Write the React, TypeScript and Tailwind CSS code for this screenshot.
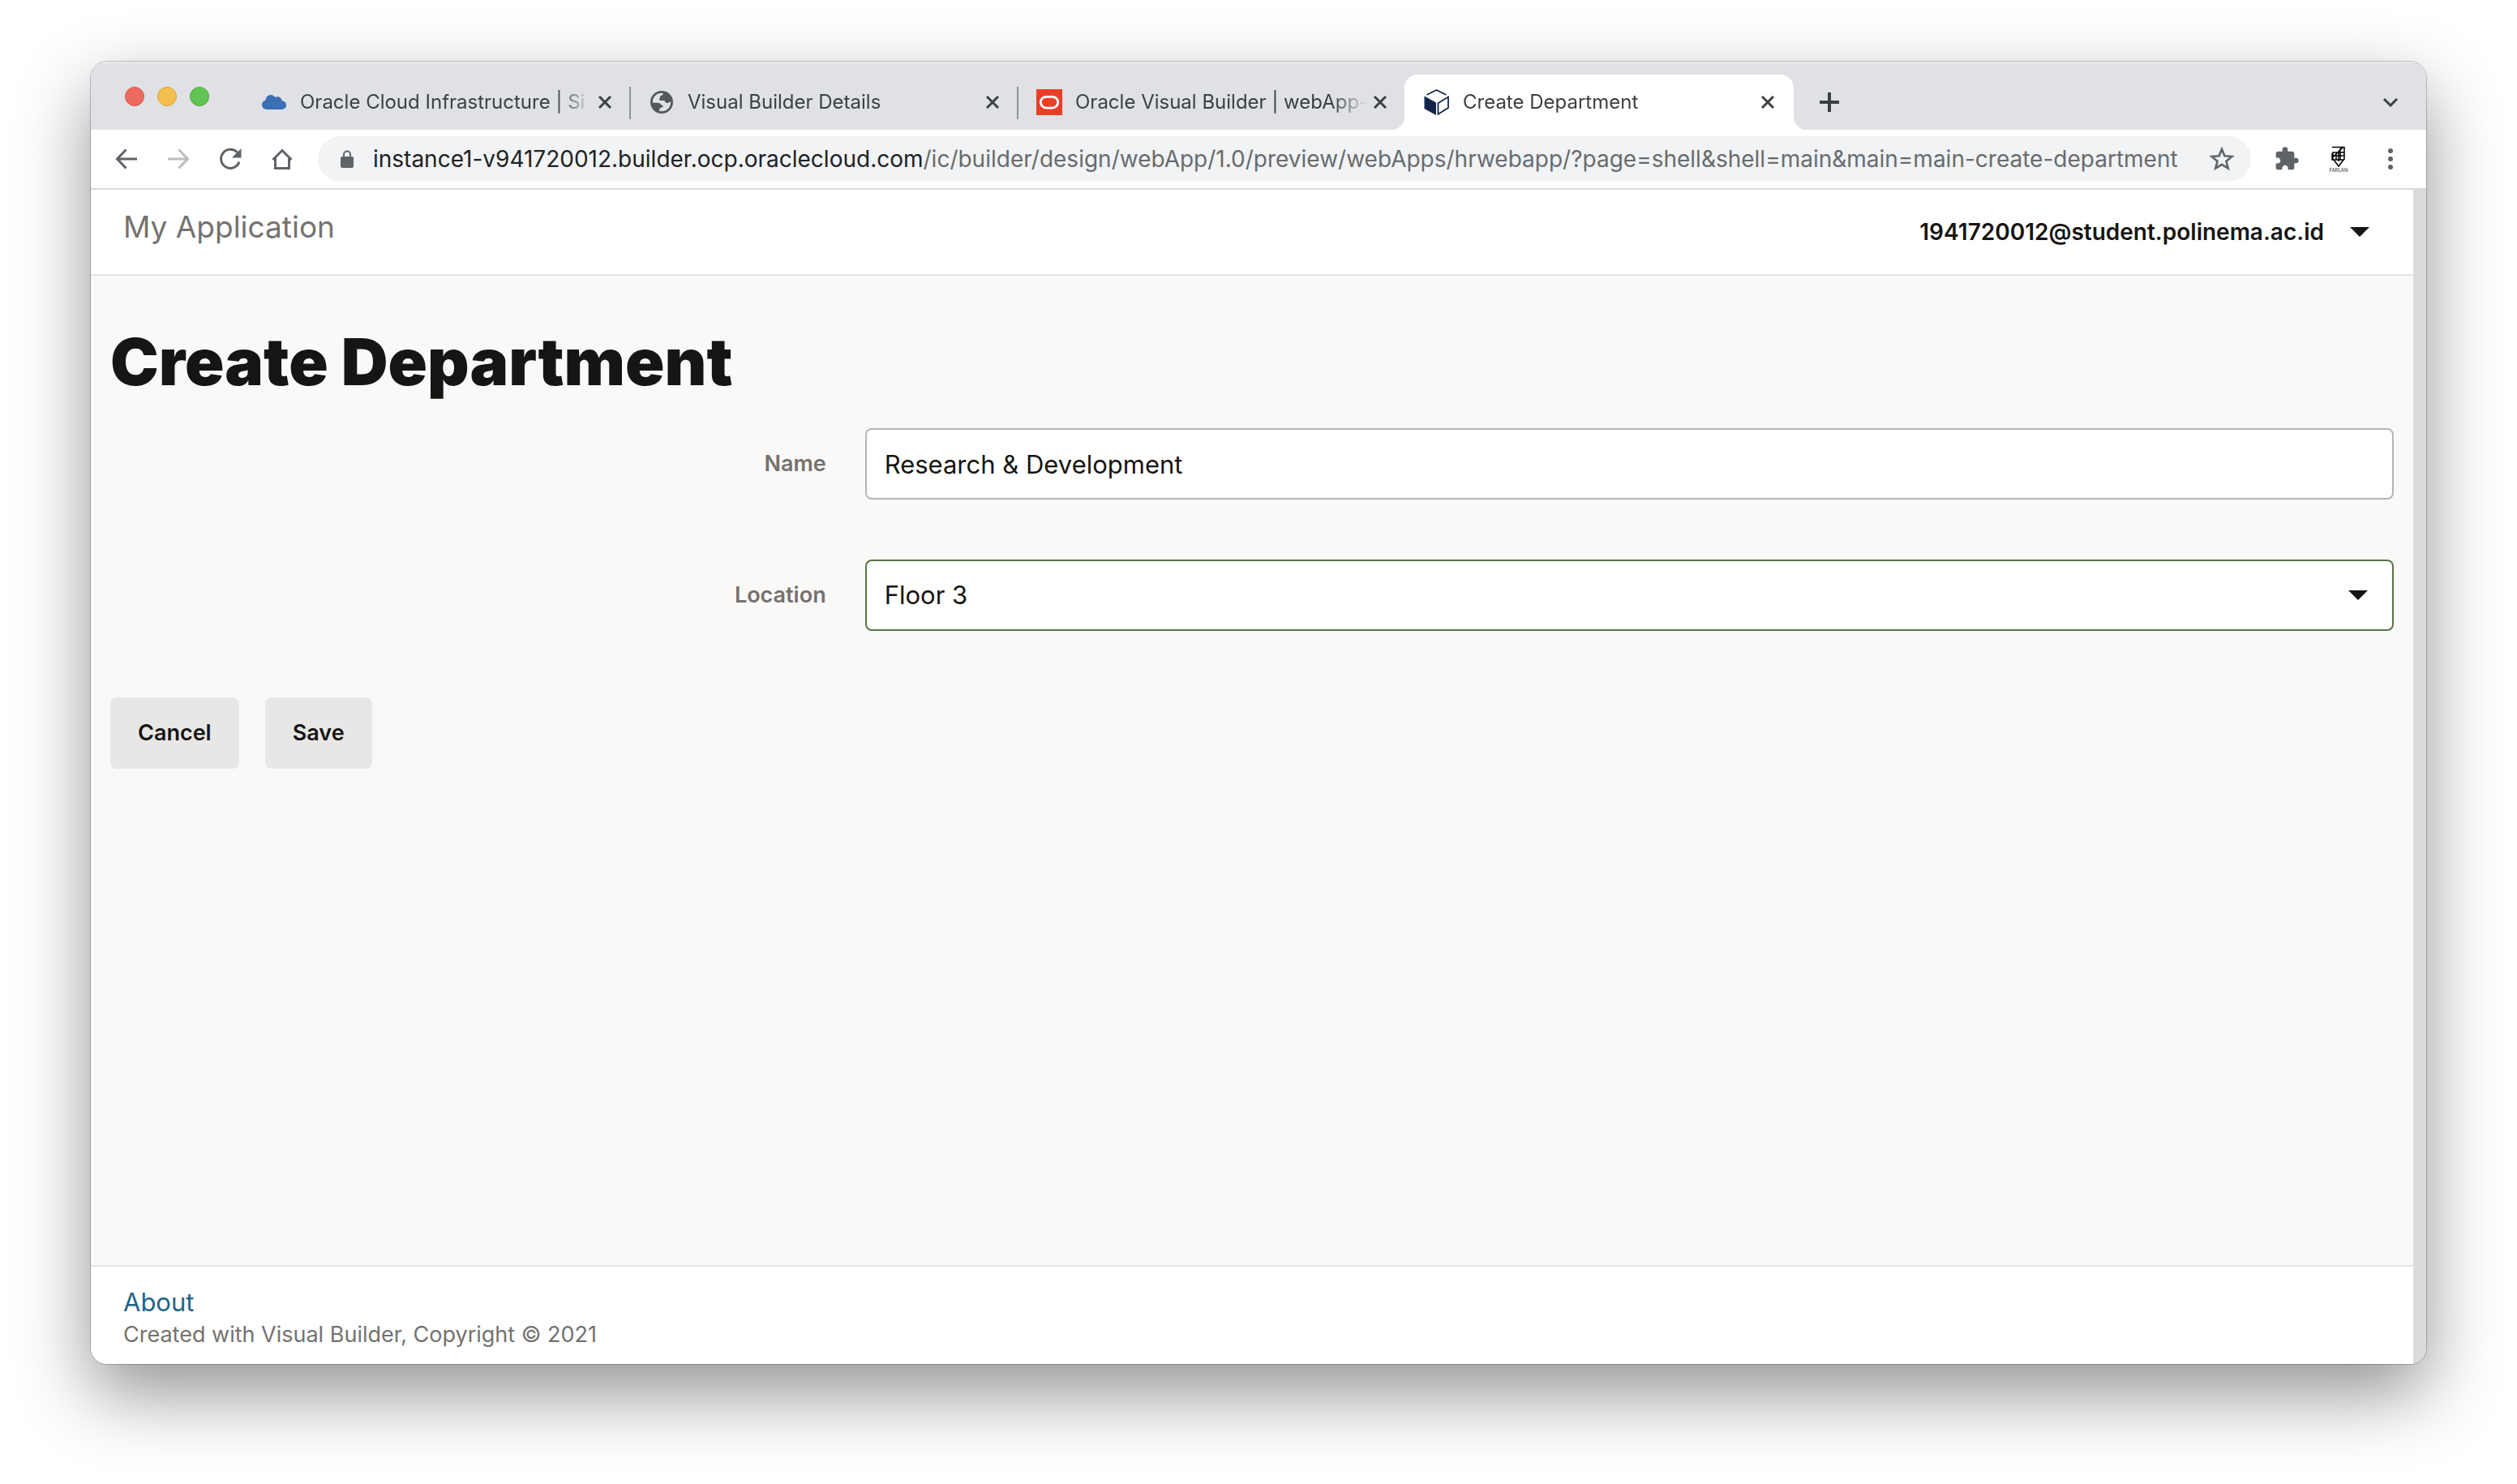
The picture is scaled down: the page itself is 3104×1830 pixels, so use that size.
import React from "react";

function CloseIcon() {
  return (
    <svg viewBox="0 0 16 16" className="size-4" aria-hidden="true">
      <path d="M1 1L15 15M15 1L1 15" stroke="#3c4043" strokeWidth="3" fill="none" />
    </svg>
  );
}

function CloudIcon() {
  return (
    <svg viewBox="0 0 32 32" className="size-8" aria-hidden="true">
      <path
        d="M8 25C3.500 25 1 22.500 1 19.200C1 16.200 3 14 5.600 13.400C5.800 9.800 8.600 7 12 7C14.200 7 16 8.200 17.200 10C18 9.500 19 9.300 20 9.300C23 9.300 25.400 11.500 25.800 14.200C29 14.400 31 16.700 31 19.500C31 22.600 28.600 25 25 25Z"
        fill="#3a70b5"
      />
    </svg>
  );
}

function GlobeIcon() {
  return (
    <svg viewBox="0 0 32 32" className="size-8" aria-hidden="true">
      <circle cx="16" cy="16" r="12.600" fill="#dfe1e5" stroke="#54575c" strokeWidth="2.800" />
      <path
        d="M18 3.500C18 6.500 17 7.500 15 8C13.500 8.500 14.500 10.500 13.500 11.500C12.500 12.500 13 14 15 14H18.500C20.500 14 20 16.500 22 17C24.500 17.500 25.500 15 28 15.500C28 9 24 4.500 18 3.500Z"
        fill="#54575c"
      />
      <path
        d="M4 16.500C7 17 10.500 16.500 13 17C15 17.500 14.500 19.500 16.500 19.500C18 19.500 18 22 16.500 22.500C14 22.500 13 23.500 13 28C8 27.500 4 23 4 16.500Z"
        fill="#54575c"
      />
    </svg>
  );
}

function OracleIcon() {
  return (
    <svg viewBox="0 0 32 32" className="size-8" aria-hidden="true">
      <rect width="32" height="32" fill="#ea3f26" />
      <rect x="5.300" y="9.300" width="21.400" height="13.800" rx="6.900" fill="none" stroke="#fff" strokeWidth="2.800" />
    </svg>
  );
}

function CubeIcon() {
  return (
    <svg viewBox="0 0 32 32" className="size-8" aria-hidden="true">
      <path d="M3.500 7L15.500 1L27.500 7" fill="none" stroke="#13254a" strokeWidth="1.600" />
      <path d="M0.500 8.500L15 16.500V32L0.500 24Z" fill="#13254a" />
      <path d="M17.500 17.300L30 9.600V23L17.500 30.700Z" fill="none" stroke="#13254a" strokeWidth="1.800" />
    </svg>
  );
}

type TabProps = { title: string; icon: React.ReactNode; active?: boolean; divider?: boolean };

function Tab({ title, icon, active, divider }: TabProps) {
  return (
    <div
      className={
        active
          ? "relative flex h-[68px] w-[480px] shrink-0 items-center rounded-t-2xl bg-white pl-6 pr-4"
          : "relative flex h-[68px] w-[478px] shrink-0 items-center pl-6 pr-3.5"
      }
    >
      {divider && <span className="absolute left-0 top-[15px] h-10 w-0.5 bg-[#8e9196]" />}
      {active && (
        <>
          <svg viewBox="0 0 16 16" className="absolute -left-4 bottom-0 size-4" aria-hidden="true">
            <path d="M16 0V16H0C9 16 16 9 16 0Z" fill="#fff" />
          </svg>
          <svg viewBox="0 0 16 16" className="absolute -right-4 bottom-0 size-4" aria-hidden="true">
            <path d="M0 0V16H16C7 16 0 9 0 0Z" fill="#fff" />
          </svg>
        </>
      )}
      {icon}
      <a
        href="#"
        className="ml-4 min-w-0 flex-1 overflow-hidden whitespace-nowrap text-2xl leading-8 text-[#3c4043] [mask-image:linear-gradient(to_right,black_calc(100%-44px),transparent)]"
      >
        {title}
      </a>
      <button aria-label={"Close " + title} className="flex size-8 items-center justify-center">
        <CloseIcon />
      </button>
    </div>
  );
}

function TabStrip() {
  return (
    <div className="flex h-[84px] items-end bg-[#dfe1e5] shadow-[inset_0_2px_0_#ebecef]">
      <div className="flex w-[186px] shrink-0 items-center gap-4 self-start pl-[42px] pt-[31px]">
        <span className="size-6 rounded-full border border-[#d6574c] bg-[#ed6a5e]" />
        <span className="size-6 rounded-full border border-[#d8a13c] bg-[#f5bf4f]" />
        <span className="size-6 rounded-full border border-[#51a73f] bg-[#61c554]" />
      </div>
      <Tab title="Oracle Cloud Infrastructure | Si" icon={<CloudIcon />} />
      <Tab title="Visual Builder Details" icon={<GlobeIcon />} divider />
      <Tab title="Oracle Visual Builder | webApp-" icon={<OracleIcon />} divider />
      <Tab title="Create Department" icon={<CubeIcon />} active />
      <button aria-label="New tab" className="ml-6 flex h-[68px] w-10 items-center justify-center">
        <svg viewBox="0 0 24 24" className="size-6" aria-hidden="true">
          <path d="M12 0V24M0 12H24" stroke="#3c4043" strokeWidth="4" />
        </svg>
      </button>
      <button aria-label="Search tabs" className="ml-auto mr-6 flex h-[68px] w-10 items-center justify-center">
        <svg viewBox="0 0 20 12" className="h-3 w-5" aria-hidden="true">
          <path d="M2 2L10 10L18 2" fill="none" stroke="#3c4043" strokeWidth="3" />
        </svg>
      </button>
    </div>
  );
}

function Toolbar() {
  return (
    <div className="flex h-[74px] items-center border-b-2 border-[#dadada] bg-white px-7 text-[#5f6368]">
      <div className="flex shrink-0 items-center gap-8">
        <button aria-label="Back" className="size-8">
          <svg viewBox="0 0 32 32" className="size-8" aria-hidden="true">
            <path d="M29 16H5M15.500 4.500L4.500 16L15.500 27.500" fill="none" stroke="currentColor" strokeWidth="3" />
          </svg>
        </button>
        <button aria-label="Forward" className="size-8 text-[#babcbe]">
          <svg viewBox="0 0 32 32" className="size-8" aria-hidden="true">
            <path d="M3 16H27M16.500 4.500L27.500 16L16.500 27.500" fill="none" stroke="currentColor" strokeWidth="3" />
          </svg>
        </button>
        <button aria-label="Reload" className="size-8">
          <svg viewBox="0 0 32 32" className="size-8" aria-hidden="true">
            <path d="M27 19.500A11.500 11.500 0 1 1 24.500 8" fill="none" stroke="currentColor" strokeWidth="3" />
            <path d="M29.500 3V14.500H18Z" fill="currentColor" />
          </svg>
        </button>
        <button aria-label="Home" className="size-8">
          <svg viewBox="0 0 32 32" className="size-8" aria-hidden="true">
            <path d="M4.500 17L16 5.500L27.500 17M7.500 15V27.500H24.500V15" fill="none" stroke="currentColor" strokeWidth="3" />
          </svg>
        </button>
      </div>
      <div className="ml-7 flex h-14 min-w-0 flex-1 items-center rounded-full bg-[#f1f3f4] pl-7 pr-5">
        <svg viewBox="0 0 16 22" className="h-[22px] w-4 shrink-0" aria-hidden="true">
          <path d="M4 9V5.500A4 4 0 0 1 12 5.500V9" fill="none" stroke="currentColor" strokeWidth="2" />
          <rect y="8" width="16" height="14" rx="2" fill="currentColor" />
        </svg>
        <p className="ml-6 min-w-0 flex-1 overflow-hidden whitespace-nowrap text-[28px] leading-10 text-[#686b6f]">
          <span className="text-[#202124]">instance1-v941720012.builder.ocp.oraclecloud.com</span>
          /ic/builder/design/webApp/1.0/preview/webApps/hrwebapp/?page=shell&amp;shell=main&amp;main=main-create-department
        </p>
        <button aria-label="Bookmark this page" className="size-8 shrink-0">
          <svg viewBox="0 0 32 32" className="size-8" aria-hidden="true">
            <path
              d="M16 4L19.400 12.300L28.500 13L21.500 18.800L23.700 27.500L16 22.800L8.300 27.500L10.500 18.800L3.500 13L12.600 12.300Z"
              fill="none"
              stroke="currentColor"
              strokeWidth="2.600"
            />
          </svg>
        </button>
      </div>
      <div className="ml-7 flex shrink-0 items-center gap-8">
        <button aria-label="Extensions" className="size-8">
          <svg viewBox="0 0 24 24" className="size-8" aria-hidden="true">
            <path
              d="M20.500 11H19V7c0-1.100-.9-2-2-2h-4V3.500a2.500 2.500 0 0 0-5 0V5H4c-1.100 0-1.990.9-1.990 2v3.800H3.500c1.490 0 2.700 1.210 2.700 2.700s-1.210 2.700-2.700 2.700H2V20c0 1.100.9 2 2 2h3.800v-1.500c0-1.490 1.210-2.700 2.700-2.700s2.700 1.210 2.700 2.700V22H17c1.100 0 2-.9 2-2v-4h1.500a2.500 2.500 0 0 0 0-5z"
              fill="currentColor"
            />
          </svg>
        </button>
        <button aria-label="Profile" className="flex h-8 w-8 flex-col items-center text-black">
          <svg viewBox="0 0 18 26" className="h-[26px] w-[18px] shrink-0" aria-hidden="true">
            <path
              d="M1 1.500H16M16 1V17M1 9V17H16M2 17L2 8L8 8L13 2M3 13L14 2M2 8H16M2 12H16M6 9V17M11 3V17M3 17L9 25L15 17M9 8V19"
              fill="none"
              stroke="currentColor"
              strokeWidth="1.500"
            />
          </svg>
          <span className="text-[6px] leading-2 text-[#333]">FARLAN</span>
        </button>
        <button aria-label="Menu" className="size-8">
          <svg viewBox="0 0 32 32" className="size-8" aria-hidden="true">
            <circle cx="16" cy="6" r="3" fill="currentColor" />
            <circle cx="16" cy="16" r="3" fill="currentColor" />
            <circle cx="16" cy="26" r="3" fill="currentColor" />
          </svg>
        </button>
      </div>
    </div>
  );
}

function AppHeader() {
  return (
    <header className="flex h-[106px] items-center justify-between border-b-2 border-[#e4e3e2] bg-white pl-10 pr-[54px]">
      <p className="mb-3 text-[37px] leading-12 text-[#74726f]">My Application</p>
      <button className="flex items-center gap-8 text-[28px] font-semibold leading-10 text-[#161513]">
        1941720012@student.polinema.ac.id
        <svg viewBox="0 0 24 12" className="h-3 w-6" aria-hidden="true">
          <path d="M0 0H24L12 12Z" fill="currentColor" />
        </svg>
      </button>
    </header>
  );
}

function DepartmentForm() {
  return (
    <main className="flex-1 bg-[#fbf9f8] pt-[62px]">
      <h1 className="pl-6 text-[80px] font-black leading-[88px] text-[#161513]">Create Department</h1>
      <form className="mt-[38px] flex flex-col">
        <div className="grid grid-cols-3 items-center">
          <label htmlFor="name" className="pr-12 text-right text-[27px] font-semibold leading-10 text-[#74726f]">
            Name
          </label>
          <div className="col-span-2 pr-6">
            <input
              id="name"
              type="text"
              defaultValue="Research & Development"
              className="block h-[88px] w-full rounded-lg border-2 border-[#b6b5b4] bg-white px-[22px] text-[31px] leading-10 text-[#161513] outline-none"
            />
          </div>
        </div>
        <div className="mt-[74px] grid grid-cols-3 items-center">
          <label htmlFor="location" className="pr-12 text-right text-[27px] font-semibold leading-10 text-[#74726f]">
            Location
          </label>
          <div className="relative col-span-2 pr-6">
            <select
              id="location"
              defaultValue="Floor 3"
              className="block h-[88px] w-full appearance-none rounded-lg border-2 border-[#5b7446] bg-white px-[22px] text-[31px] leading-10 text-[#161513] outline-none"
            >
              <option>Floor 1</option>
              <option>Floor 2</option>
              <option>Floor 3</option>
            </select>
            <svg viewBox="0 0 24 12" className="pointer-events-none absolute right-14 top-[38px] h-3 w-6" aria-hidden="true">
              <path d="M0 0H24L12 12Z" fill="#161513" />
            </svg>
          </div>
        </div>
        <div className="mt-[82px] flex gap-8 pl-6">
          <button type="button" className="h-[88px] rounded-lg bg-[#e8e7e5] px-[34px] text-[27px] font-semibold leading-10 text-[#161513]">
            Cancel
          </button>
          <button type="submit" className="h-[88px] rounded-lg bg-[#e8e7e5] px-[34px] text-[27px] font-semibold leading-10 text-[#161513]">
            Save
          </button>
        </div>
      </form>
    </main>
  );
}

function AppFooter() {
  return (
    <footer className="border-t-2 border-[#e6e5e4] bg-white pb-4 pl-10 pt-6">
      <a href="#" className="block w-fit text-[31px] leading-10 text-[#226489]">
        About
      </a>
      <p className="text-[27px] leading-10 text-[#74726f]">Created with Visual Builder, Copyright © 2021</p>
    </footer>
  );
}

export default function App() {
  return (
    <div className="flex min-h-screen flex-col bg-white px-28 pb-[148px] pt-[76px] font-['Inter',sans-serif]">
      <div className="flex flex-1 flex-col overflow-hidden rounded-[20px] shadow-[0_0_0_1px_rgba(0,0,0,0.22),0_36px_90px_rgba(0,0,0,0.43)]">
        <TabStrip />
        <Toolbar />
        <div className="flex flex-1">
          <div className="flex min-w-0 flex-1 flex-col">
            <AppHeader />
            <DepartmentForm />
            <AppFooter />
          </div>
          <div className="w-4 shrink-0 bg-[#dcdbd9]" />
        </div>
      </div>
    </div>
  );
}
